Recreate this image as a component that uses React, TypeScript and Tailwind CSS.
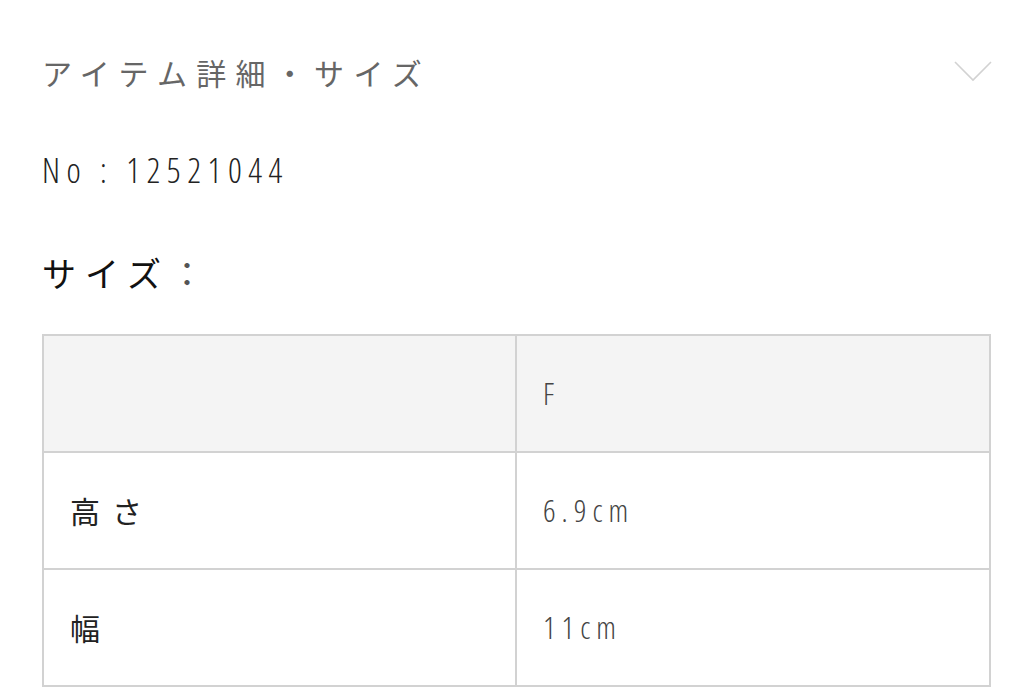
const latin = { fontFamily: '"Open Sans", "Noto Sans CJK JP", sans-serif', fontStretch: '75%' } as const;

const rows = [
  { label: '高さ', value: '6.9cm' },
  { label: '幅', value: '11cm' },
];

export default function App() {
  return (
    <div className="w-[1016px] h-[696px] overflow-hidden bg-white pl-[42px] pr-[25px] pt-[50px] font-['Noto_Sans_CJK_JP',sans-serif]">
      <div className="flex items-center justify-between h-[44px]">
        <h2 className="text-[30px] tracking-[9.3px] text-[#666] font-normal">アイテム詳細・サイズ</h2>
        <svg width="38" height="22" viewBox="0 0 38 22" className="mr-[-1px]">
          <path d="M1 1 L19 19 L37 1" fill="none" stroke="#d2d2d2" strokeWidth="1.6" />
        </svg>
      </div>

      <p
        className="mt-[59px] text-[34px] font-light tracking-[6.5px] text-[#222] leading-none"
        style={latin}
      >
        No : 12521044
      </p>

      <h3 className="mt-[69px] text-[34px] tracking-[9px] text-[#111] leading-none">
        サイズ<span className="text-[#555]">：</span>
      </h3>

      <table className="mt-[44px] w-full border-collapse border-2 border-[#d2d2d2]">
        <tbody>
          <tr className="bg-[#f4f4f4] h-[117px]">
            <td className="w-[473px] border-2 border-[#d2d2d2]" />
            <td
              className="border-2 border-[#d2d2d2] pl-[26px] text-[31px] font-light text-[#444]"
              style={latin}
            >
              F
            </td>
          </tr>
          {rows.map((r) => (
            <tr key={r.label} className="h-[117px]">
              <td className="border-2 border-[#d2d2d2] pl-[26px] text-[30px] tracking-[12px] text-[#222]">
                {r.label}
              </td>
              <td
                className="border-2 border-[#d2d2d2] pl-[26px] text-[31px] font-light tracking-[6px] text-[#444]"
                style={latin}
              >
                {r.value}
              </td>
            </tr>
          ))}
        </tbody>
      </table>
    </div>
  );
}
